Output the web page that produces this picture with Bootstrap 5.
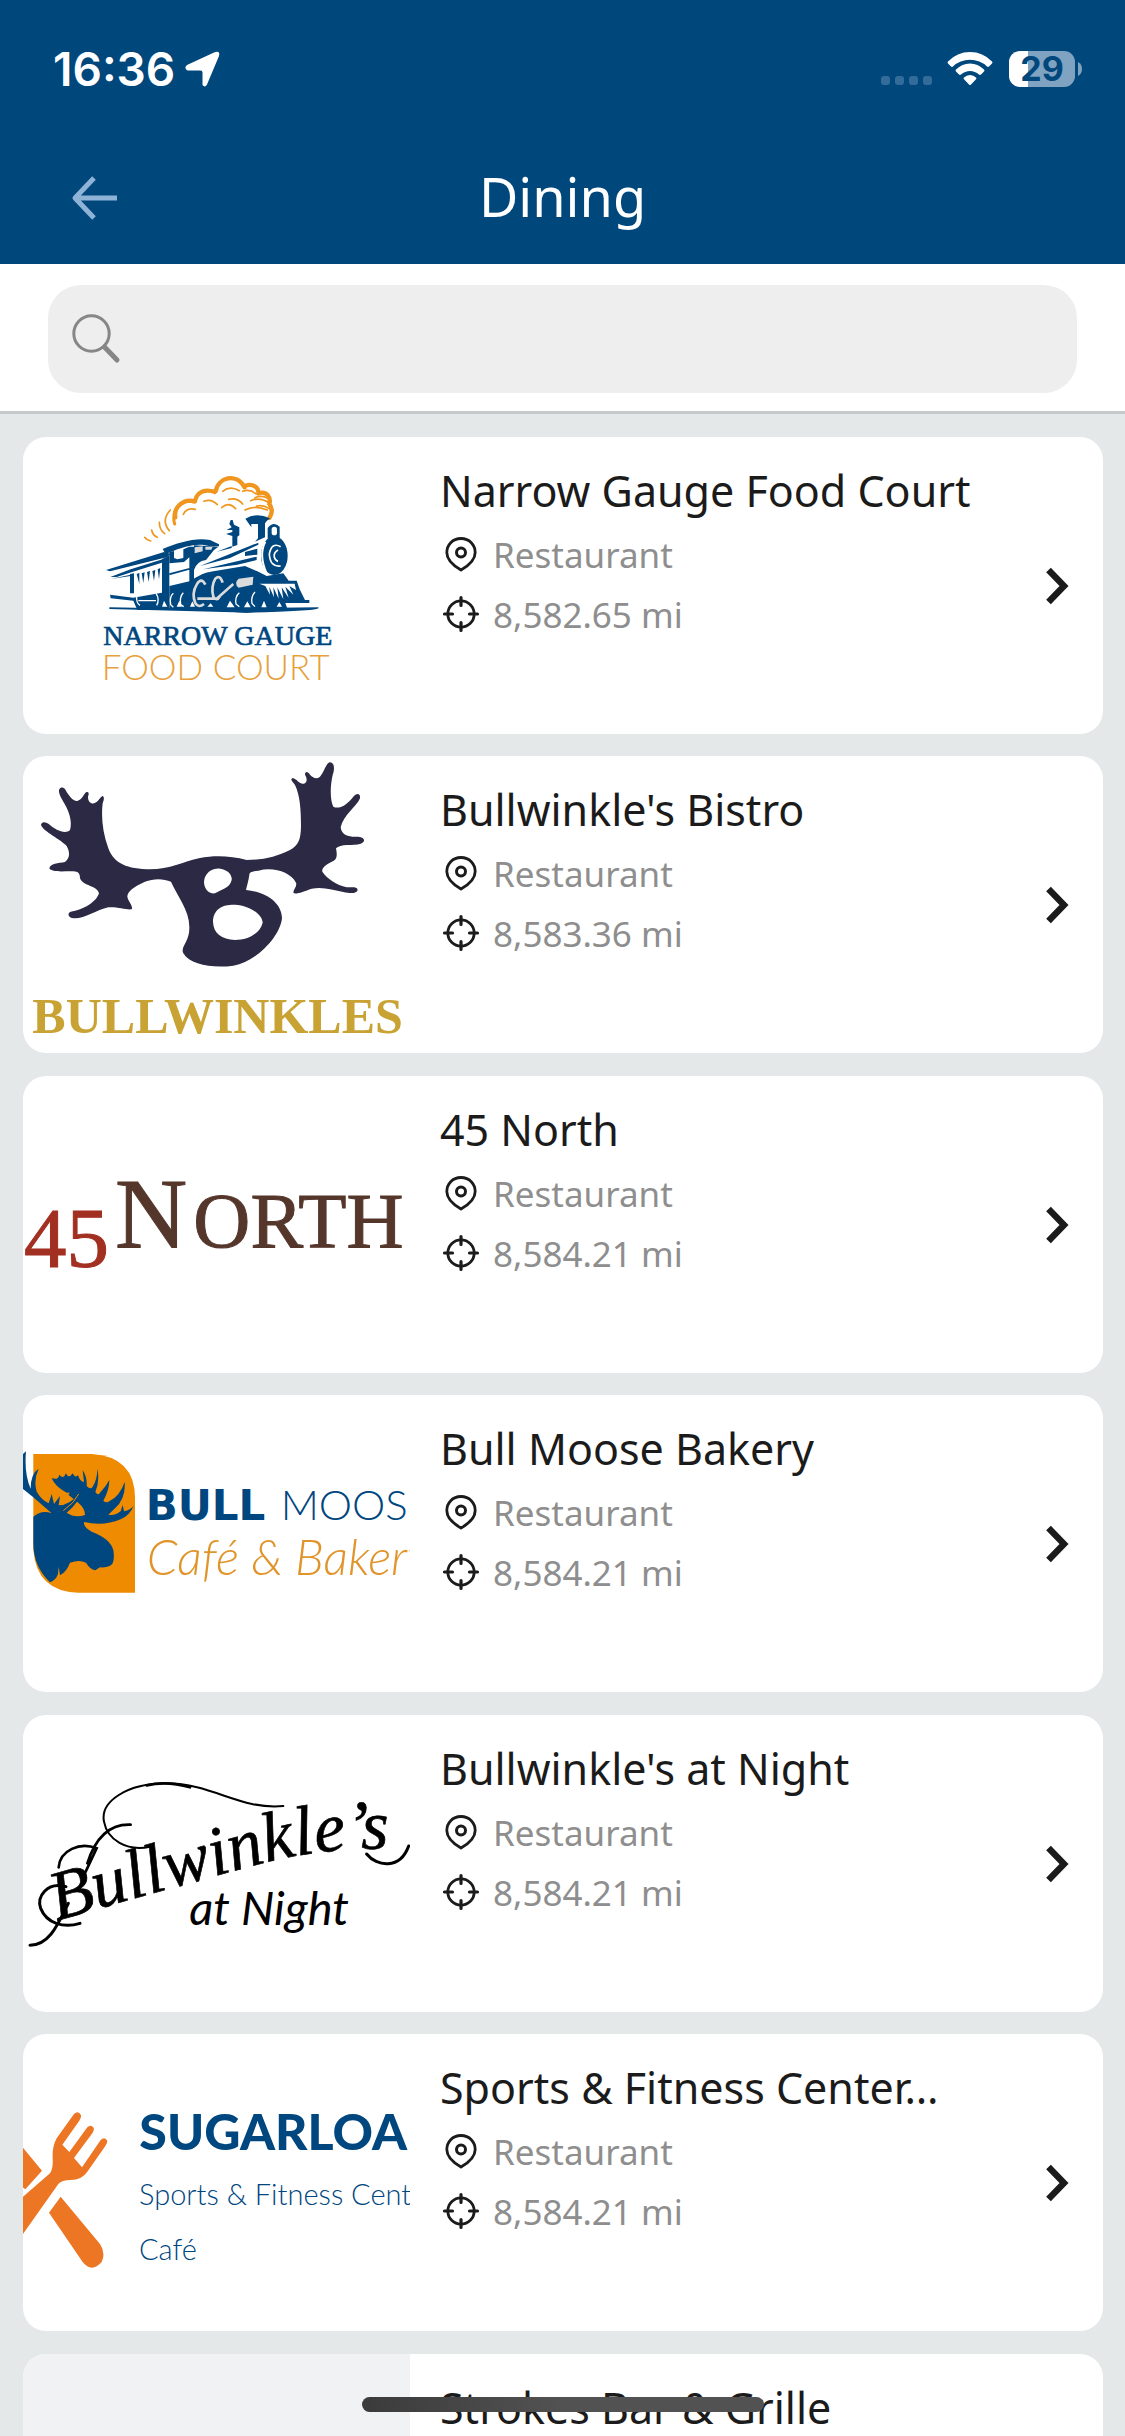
<!DOCTYPE html>
<html lang="en">
<head>
<meta charset="utf-8">
<meta name="viewport" content="width=device-width, initial-scale=1">
<title>Dining</title>
<link href="https://cdn.jsdelivr.net/npm/bootstrap@5.3.0/dist/css/bootstrap.min.css" rel="stylesheet">
<style>
  :root { --brand: #00477c; --ink: #1b1b1b; --muted: #8e8e8e; }
  body { background: #e4e8e9; font-family: "Noto Sans", "Open Sans", sans-serif; color: var(--ink); }
  .app-top { background: var(--brand); }
  .status-row { height: 132px; padding: 6px 43px 0 53px; font-family: Inter, sans-serif; }
  .clock { font-size: 46px; line-height: 52px; font-weight: 600; }
  .battery { width: 66px; height: 36px; border-radius: 11px; background: linear-gradient(90deg, #fff 19px, #7fa3c1 19px); color: var(--brand); font-size: 34px; line-height: 36px; font-weight: 700; }
  .nav-row { height: 132px; }
  .side-slot { flex: 1 1 0; padding-left: 67px; }
  .page-title { font-size: 54px; line-height: 64px; padding-bottom: 4px; font-weight: 400; }
  .search-panel { padding: 21px 48px 18px; border-bottom: 3px solid #c6c9c9; }
  .search-box { background: #eee; border-radius: 33px; height: 108px; padding: 0 24px; gap: 20px; }
  .search-box input { font-size: 40px; line-height: 56px; }
  .venue-list { padding: 23px 22px 23px 23px; scrollbar-width: none; }
  .venue { height: 297px; border-radius: 23px; margin-bottom: 22px; color: var(--ink); }
  li:nth-child(even) > .venue { margin-bottom: 23px; }
  .venue-art { width: 387px; height: 297px; }
  .art-empty { background: #f0f2f3; }
  .venue-info { padding: 24px 0 0 30px; }
  .venue-name { font-size: 43px; line-height: 60px; font-weight: 400; }
  .venue-meta { font-size: 35px; line-height: 60px; color: var(--muted); gap: 9px; }
  .venue-meta svg { margin-left: -2px; }
  .venue-go { padding-right: 33px; }
  .home-bar { bottom: 24px; width: 402px; height: 15px; border-radius: 8px; background: linear-gradient(90deg, #3b3b3b, #525252 50%); }
</style>
</head>
<body>
<svg class="d-none" aria-hidden="true">
  <symbol id="i-pin" viewBox="0 0 46 40"><path d="M23 3.500C14.500 3.500 8.800 10 8.800 17.500C8.800 25 16 31 23 35C30 31 37.200 25 37.200 17.500C37.200 10 31.500 3.500 23 3.500Z" fill="none" stroke="#1b1b1b" stroke-width="2.800" stroke-linejoin="round"/><circle cx="23" cy="17.500" r="4.500" fill="none" stroke="#1b1b1b" stroke-width="3"/></symbol>
  <symbol id="i-target" viewBox="0 0 46 40"><circle cx="23" cy="19" r="13.200" fill="none" stroke="#1b1b1b" stroke-width="2.800"/><path d="M23 2.500V10.500M23 27.500V35.500M6.500 19H14.500M31.500 19H39.500" stroke="#1b1b1b" stroke-width="3.200" stroke-linecap="round"/></symbol>
  <symbol id="i-go" viewBox="0 0 26 40"><path d="M4.500 4L20 20L4.500 36" fill="none" stroke="#1b1b1b" stroke-width="6.500"/></symbol>
</svg>
<div class="vh-100 d-flex flex-column overflow-hidden">
  <header class="app-top text-white flex-shrink-0">
    <div class="status-row d-flex align-items-center justify-content-between">
      <div class="d-flex align-items-center gap-2">
        <span class="clock">16:36</span>
        <svg width="38" height="38" viewBox="0 0 38 38" aria-hidden="true"><path d="M31 2.500Q37.500 0 36 6L24 34.500Q22 38 19.500 35V22.500Q19.500 20.500 17.500 20.500H4.500Q.5 18 4 15Z" fill="#fff"/></svg>
      </div>
      <div class="d-flex align-items-center">
        <svg width="66" height="36" viewBox="0 0 66 36" aria-hidden="true" fill="#336c99"><rect y="25" width="9" height="9" rx="3"/><rect x="14" y="25" width="9" height="9" rx="3"/><rect x="28" y="25" width="9" height="9" rx="3"/><rect x="42" y="25" width="9" height="9" rx="3"/></svg>
        <svg width="46" height="36" viewBox="0 0 46 36" aria-hidden="true" fill="#fff"><path d="M1 10.500Q10 1 23 1T45 10.500Q46 11.500 45 12.500L42 15.500Q41 16.300 40 15.500Q33 8.800 23 8.800T6 15.500Q5 16.300 4 15.500L1 12.500Q0 11.500 1 10.500Z"/><path d="M9 18.500Q15 12.500 23 12.500T37 18.500Q38 19.500 37 20.500L34 23.500Q33 24.300 32 23.500Q28 20 23 20T14 23.500Q13 24.300 12 23.500L9 20.500Q8 19.500 9 18.500Z"/><path d="M17 26.500Q19.500 24 23 24T29 26.500Q30 27.300 29 28.300L24 33.500Q23 34.500 22 33.500L17 28.300Q16 27.300 17 26.500Z"/></svg>
        <span class="battery d-flex align-items-center justify-content-center ms-3">29</span>
        <svg width="7" height="36" viewBox="0 0 7 36" aria-hidden="true"><path d="M3 11Q7 13 7 18T3 25Z" fill="#7fa3c1"/></svg>
      </div>
    </div>
    <nav class="nav-row d-flex align-items-center">
      <div class="side-slot"><button type="button" class="btn p-0 border-0 d-flex" aria-label="Back"><svg width="54" height="48" viewBox="0 0 54 48"><path d="M50 24H8M27 4L8 24L27 44" fill="none" stroke="#8fb3d6" stroke-width="5" stroke-linejoin="round"/></svg></button></div>
      <h1 class="page-title mb-0">Dining</h1>
      <div class="side-slot"></div>
    </nav>
  </header>
  <form class="search-panel bg-white flex-shrink-0" role="search">
    <div class="search-box d-flex align-items-center">
      <label for="q" class="d-flex" aria-label="Search"><svg width="50" height="52" viewBox="0 0 50 52"><circle cx="19.500" cy="20.500" r="17.700" fill="none" stroke="#868686" stroke-width="3"/><path d="M32.500 34L45 47" stroke="#868686" stroke-width="5" stroke-linecap="round"/></svg></label>
      <input id="q" type="text" class="form-control border-0 bg-transparent shadow-none p-0">
    </div>
  </form>
  <main class="flex-fill overflow-auto venue-list">
    <ul class="list-unstyled m-0">
      <li><a href="#narrow-gauge" class="venue d-flex bg-white overflow-hidden text-decoration-none">
        <svg class="venue-art flex-shrink-0" viewBox="69 21 1161 891" role="img" aria-label="Narrow Gauge Food Court logo">
          <g fill="none" stroke="#f0961e" stroke-linecap="round">
            <path d="M434 322Q440 331 452 333M455 300Q458 316 472 322M478 277Q478 300 494 311M511 240Q482 272 508 302" stroke-width="5"/>
            <path d="M524 282C512 240 545 206 582 216M586 213C588 188 612 176 642 184" stroke-width="9"/>
            <path d="M526 262C520 232 550 204 585 214M585 212C592 184 618 176 645 186M647 184C654 142 708 126 734 172M732 170C750 158 774 168 775 186M775 190C800 182 814 202 808 222C818 236 816 252 808 264" stroke-width="13"/>
            <path d="M550 253Q560 232 586 238M612 214Q634 205 652 224M668 184Q690 166 718 182M665 233Q686 214 707 236M686 208Q712 202 728 222M728 184Q750 176 768 192M735 240Q765 224 802 240M752 212Q780 200 806 218M765 203Q785 194 806 206M770 228Q790 224 808 236" stroke-width="5"/>
          </g>
          <g fill="#00467f">
            <path d="M318 420L492 366L512 372L500 382L330 424ZM331 441L392 418L500 384V394L394 427L350 441ZM332 447L392 434V438Z"/>
            <path d="M390 432L402 430V490H390ZM410 432L418 429V462ZM425 430L434 427L430 459ZM441 426L450 423L446 456ZM457 423L466 420L462 453ZM473 418L481 414L477 448ZM486 388L508 376V540H486Z"/>
            <path d="M330 494L400 503L498 486V540H412L400 512L332 505Z"/>
            <path d="M488 357C535 338 585 322 630 330L657 343V349H630C600 338 560 345 506 368L500 378Z"/>
            <path d="M508 366L522 363V384L532 388L550 384V358L568 350H582V470L568 466V382L552 396L508 400ZM508 430L568 414V419L508 436Z"/>
            <path d="M582 346L655 350L642 360L618 390Q590 394 582 420ZM508 468L575 452V540H508Z"/>
            <path d="M600 408L775 338V344L690 384ZM650 365L695 348V354ZM610 418L770 380V390L712 404ZM735 366L772 356V374L735 378Z"/>
            <path d="M573 455Q600 428 640 424L735 408L772 424L800 438L850 430L866 452H890L900 480L915 510H928V519H856L862 536L740 548L570 538Z"/>
            <ellipse cx="823" cy="377" rx="40" ry="58"/>
            <path d="M736 266Q770 246 810 265Q798 274 795 280V322L765 335L774 325V282H754V292ZM803 294Q820 272 839 290V326H803ZM688 282L692 270L698 270L702 284L718 292V316L712 320V345L697 350V318L678 312L697 306V300L680 300L695 292Z"/>
            <path d="M328 532L560 536L955 532Q960 537 930 540Q760 551 700 547L328 537Z"/>
          </g>
          <path d="M584 352L608 349V364L584 370ZM616 350L638 350L634 359H616Z" fill="#d8dadb"/>
          <rect x="815" y="290" width="16" height="26" rx="8" fill="#fff"/>
          <g fill="none" stroke="#fff" stroke-width="5">
            <path d="M842 350Q815 335 808 372Q810 412 842 408M834 360Q820 368 823 382Q826 392 834 394" />
            <path d="M796 335Q775 375 800 430" stroke-width="6"/>
            <path d="M520 490Q508 500 512 524L520 532M550 488Q538 500 542 524L551 530M718 488Q704 500 708 522L718 530M765 486Q752 500 756 520L765 530M410 496Q408 520 420 526M468 490Q480 508 470 526M415 512H468" stroke-width="4"/>
          </g>
          <g fill="none" stroke="#d9dbdc" stroke-width="8"><path d="M616 464Q604 440 590 464Q574 490 586 520Q596 535 612 522M668 458Q660 432 646 446Q632 470 640 500Q650 516 660 498M592 506H650L700 462" /></g>
          <path d="M716 446L760 440L758 464L716 473Q700 460 716 446Z" fill="#d9dbdc"/>
          <path d="M778 461H884L888 480L868 468L880 494L856 470L866 504L845 472L850 508L832 472L836 506L820 472L822 502L808 470L810 494L796 468Z" fill="#fff"/>
          <path d="M486 530L492 512L502 530ZM530 530L538 512L546 530ZM570 530L577 514L585 530ZM622 530L632 520L640 530ZM680 532L690 512L704 532ZM732 532L742 514L752 532ZM784 532L792 512L800 532ZM830 530L838 516L846 530Z" fill="#fff"/>
          <text x="310" y="645" font-family="Liberation Serif, serif" font-size="84" fill="#00467f" stroke="#00467f" stroke-width="2">NARROW GAUGE</text>
          <text x="305" y="751" font-family="Lato, sans-serif" font-weight="300" font-size="105" fill="#e8a03c">FOOD COURT</text>
        </svg>
        <div class="venue-info flex-fill"><h2 class="venue-name mb-1">Narrow Gauge Food Court</h2>
          <div class="venue-meta d-flex align-items-center"><svg width="46" height="40" aria-hidden="true"><use href="#i-pin"/></svg>Restaurant</div>
          <div class="venue-meta d-flex align-items-center"><svg width="46" height="40" aria-hidden="true"><use href="#i-target"/></svg>8,582.65 mi</div></div>
        <div class="venue-go d-flex align-items-center"><svg width="26" height="40" aria-hidden="true"><use href="#i-go"/></svg></div>
      </a></li>
      <li><a href="#bistro" class="venue d-flex bg-white overflow-hidden text-decoration-none">
        <svg class="venue-art flex-shrink-0" viewBox="69 48 1161 891" role="img" aria-label="Bullwinkles logo">
          <path fill="#2b2944" fill-rule="evenodd" d="M178 148C182 140 192 140 198 152C205 165 220 185 232 183C245 180 250 165 258 157C266 153 268 160 264 170C264 185 272 192 283 190C295 185 300 172 307 168C313 168 313 178 308 190C303 230 308 280 325 325C340 365 370 385 440 388C510 390 545 365 600 354C640 346 690 346 740 360C790 360 830 350 870 330C895 315 902 300 903 260C903 210 900 165 885 135C875 122 870 118 878 114C890 116 900 135 912 131C922 128 922 115 915 104C915 92 924 94 930 104C940 115 950 118 960 110C972 98 978 68 990 67C1003 68 1005 85 998 105C990 140 990 180 1000 200C1020 210 1045 190 1060 170C1070 158 1082 160 1080 175C1070 200 1030 225 1022 262C1025 290 1055 292 1075 290C1095 292 1098 305 1082 311C1060 318 1020 310 1008 325C1012 345 1012 360 995 365C975 375 965 385 967 395C980 415 1010 435 1040 442C1060 442 1072 440 1073 450C1070 462 1050 460 1030 456C1000 450 970 440 935 446C910 455 885 465 880 458C880 448 892 440 888 428C870 395 820 380 775 392C752 395 748 398 748 405C745 425 740 440 738 450C800 455 846 490 846 535C840 590 770 665 700 677C640 685 570 675 550 640C540 620 570 605 568 560C568 510 530 465 513 425C490 415 460 415 435 425C400 440 382 455 382 470C385 485 398 495 396 507C385 512 355 500 325 502C290 510 255 535 225 535C205 535 200 520 212 515C250 510 290 485 297 460C290 435 250 440 240 415C240 400 235 395 220 394C190 393 155 398 148 385C150 370 175 370 195 366C208 355 212 340 200 318C185 300 130 275 123 255C125 243 138 245 150 255C165 268 195 285 210 270C218 240 205 210 190 185C178 165 175 155 178 148ZM612 425C615 395 640 384 660 386C685 390 697 405 695 420C690 445 660 450 645 460C625 462 612 445 612 425ZM639 545C640 505 670 493 705 494C750 496 788 525 788 548C780 580 745 600 705 600C665 598 640 580 639 545Z"/>
          <text x="97" y="880" font-family="Liberation Serif, serif" font-weight="700" font-size="150" fill="#c8a233">BULLWINKLES</text>
        </svg>
        <div class="venue-info flex-fill"><h2 class="venue-name mb-1">Bullwinkle's Bistro</h2>
          <div class="venue-meta d-flex align-items-center"><svg width="46" height="40" aria-hidden="true"><use href="#i-pin"/></svg>Restaurant</div>
          <div class="venue-meta d-flex align-items-center"><svg width="46" height="40" aria-hidden="true"><use href="#i-target"/></svg>8,583.36 mi</div></div>
        <div class="venue-go d-flex align-items-center"><svg width="26" height="40" aria-hidden="true"><use href="#i-go"/></svg></div>
      </a></li>
      <li><a href="#north" class="venue d-flex bg-white overflow-hidden text-decoration-none">
        <svg class="venue-art flex-shrink-0" viewBox="69 18 1161 891" role="img" aria-label="45 North logo">
          <g font-family="Liberation Serif, serif" fill="#55362b" stroke="#55362b" stroke-width="3">
            <text x="72" y="591" font-size="255" fill="#a23022" stroke="#a23022">45</text>
            <text x="345" y="532" font-size="300">N<tspan x="580" font-size="237">ORTH</tspan></text>
          </g>
        </svg>
        <div class="venue-info flex-fill"><h2 class="venue-name mb-1">45 North</h2>
          <div class="venue-meta d-flex align-items-center"><svg width="46" height="40" aria-hidden="true"><use href="#i-pin"/></svg>Restaurant</div>
          <div class="venue-meta d-flex align-items-center"><svg width="46" height="40" aria-hidden="true"><use href="#i-target"/></svg>8,584.21 mi</div></div>
        <div class="venue-go d-flex align-items-center"><svg width="26" height="40" aria-hidden="true"><use href="#i-go"/></svg></div>
      </a></li>
      <li><a href="#bakery" class="venue d-flex bg-white overflow-hidden text-decoration-none">
        <svg class="venue-art flex-shrink-0" viewBox="69 15 1161 891" role="img" aria-label="Bull Moose Café &amp; Bakery logo">
          <path d="M100 192H275Q405 200 405 325V608H235Q110 605 100 480Z" fill="#ee8b00"/>
          <path fill="#00467f" d="M100 380Q125 358 155 370L100 322L60 290V200L78 184Q72 250 92 296Q92 250 116 236Q100 270 110 305Q125 330 146 340L155 312L162 342L180 318L176 346Q210 345 240 308Q240 335 200 368Q225 385 255 375Q255 355 235 338L205 314Q215 305 200 308Q165 290 155 264Q175 272 178 254Q190 270 198 250Q206 268 218 250Q225 265 234 256Q240 275 252 276L248 240Q262 262 260 288Q272 300 278 290Q292 268 292 236Q300 272 286 306Q294 318 300 308Q318 290 328 270Q328 300 310 332Q318 340 328 334Q360 318 374 276Q378 325 345 355L325 374Q345 378 362 364L368 345L372 364Q392 360 401 347Q390 375 362 388Q310 410 252 396Q250 412 275 425Q330 445 340 480Q344 505 338 520Q330 534 300 532L286 541Q270 538 258 518Q238 508 210 518Q200 545 180 556L176 530L174 552Q168 570 150 577Q100 530 100 460Z"/>
          <path d="M236 312Q222 340 190 362" stroke="#ee8b00" stroke-width="3" fill="none"/>
          <text x="437" y="389" font-family="DejaVu Sans, sans-serif" font-weight="700" font-size="126" fill="#00467f">BULL</text>
          <text x="842" y="389" font-family="Lato, sans-serif" font-weight="300" font-size="126" fill="#00467f">MOOSE</text>
          <text x="440" y="555" font-family="Lato, sans-serif" font-weight="300" font-style="italic" font-size="147" fill="#e0942a">Café &amp; Bakery</text>
        </svg>
        <div class="venue-info flex-fill"><h2 class="venue-name mb-1">Bull Moose Bakery</h2>
          <div class="venue-meta d-flex align-items-center"><svg width="46" height="40" aria-hidden="true"><use href="#i-pin"/></svg>Restaurant</div>
          <div class="venue-meta d-flex align-items-center"><svg width="46" height="40" aria-hidden="true"><use href="#i-target"/></svg>8,584.21 mi</div></div>
        <div class="venue-go d-flex align-items-center"><svg width="26" height="40" aria-hidden="true"><use href="#i-go"/></svg></div>
      </a></li>
      <li><a href="#night" class="venue d-flex bg-white overflow-hidden text-decoration-none">
        <svg class="venue-art flex-shrink-0" viewBox="69 15 1161 891" role="img" aria-label="Bullwinkle's at Night logo">
          <path id="night-base" d="M170 632Q560 520 780 462T1210 420" fill="none"/>
          <g fill="none" stroke="#000" stroke-linecap="round">
            <path d="M850 288C720 300 640 222 500 220C380 220 300 275 312 335C322 390 380 425 450 410" stroke-width="6"/>
            <path d="M440 226Q500 212 570 232" stroke-width="8"/>
            <path d="M90 706C150 705 175 640 205 580M198 530C140 515 110 560 122 595C140 640 190 655 240 640" stroke-width="9"/>
            <path d="M176 472C180 420 240 395 290 415L250 500M262 460Q300 340 392 344" stroke-width="8"/>
            <path d="M1100 432C1130 470 1200 480 1226 408" stroke-width="9"/>
          </g>
          <text font-family="Liberation Serif, serif" font-style="italic" font-size="210" stroke="#000" stroke-width="2"><textPath href="#night-base">Bullwinkle’s</textPath></text>
          <text x="568" y="645" font-family="Lato, sans-serif" font-style="italic" font-size="141">at Night</text>
        </svg>
        <div class="venue-info flex-fill"><h2 class="venue-name mb-1">Bullwinkle's at Night</h2>
          <div class="venue-meta d-flex align-items-center"><svg width="46" height="40" aria-hidden="true"><use href="#i-pin"/></svg>Restaurant</div>
          <div class="venue-meta d-flex align-items-center"><svg width="46" height="40" aria-hidden="true"><use href="#i-target"/></svg>8,584.21 mi</div></div>
        <div class="venue-go d-flex align-items-center"><svg width="26" height="40" aria-hidden="true"><use href="#i-go"/></svg></div>
      </a></li>
      <li><a href="#fitness" class="venue d-flex bg-white overflow-hidden text-decoration-none">
        <svg class="venue-art flex-shrink-0" viewBox="69 12 1161 891" role="img" aria-label="Sugarloaf Sports &amp; Fitness Center Café logo">
          <g fill="#ed7625">
            <path d="M60 342L126 422L76 478L60 465ZM182 500L300 642Q318 670 305 696Q275 730 248 696L147 548Z"/>
            <path d="M60 625V508L150 430Q160 415 158 385Q156 350 170 325L222 252Q235 240 243 256Q244 264 238 272L187 344L208 366L262 292Q272 282 281 293Q283 300 278 308L222 384L246 412L302 330Q314 318 322 332Q322 340 316 348L262 425Q245 450 212 450Q185 450 175 462Z"/>
          </g>
          <g font-family="Lato, sans-serif" fill="#00467f">
            <text x="418" y="359" font-weight="900" font-size="150">SUGARLOA</text>
            <text x="417" y="524" font-weight="300" font-size="87">Sports &amp; Fitness Cent</text>
            <text x="417" y="691" font-weight="300" font-size="87">Café</text>
          </g>
        </svg>
        <div class="venue-info flex-fill"><h2 class="venue-name mb-1">Sports &amp; Fitness Center…</h2>
          <div class="venue-meta d-flex align-items-center"><svg width="46" height="40" aria-hidden="true"><use href="#i-pin"/></svg>Restaurant</div>
          <div class="venue-meta d-flex align-items-center"><svg width="46" height="40" aria-hidden="true"><use href="#i-target"/></svg>8,584.21 mi</div></div>
        <div class="venue-go d-flex align-items-center"><svg width="26" height="40" aria-hidden="true"><use href="#i-go"/></svg></div>
      </a></li>
      <li><a href="#strokes" class="venue d-flex bg-white overflow-hidden text-decoration-none">
        <div class="venue-art art-empty flex-shrink-0"></div>
        <div class="venue-info flex-fill"><h2 class="venue-name mb-1">Strokes Bar &amp; Grille</h2></div>
      </a></li>
    </ul>
  </main>
</div>
<div class="home-bar position-fixed start-50 translate-middle-x"></div>
<script src="https://cdn.jsdelivr.net/npm/bootstrap@5.3.0/dist/js/bootstrap.bundle.min.js"></script>
</body>
</html>
